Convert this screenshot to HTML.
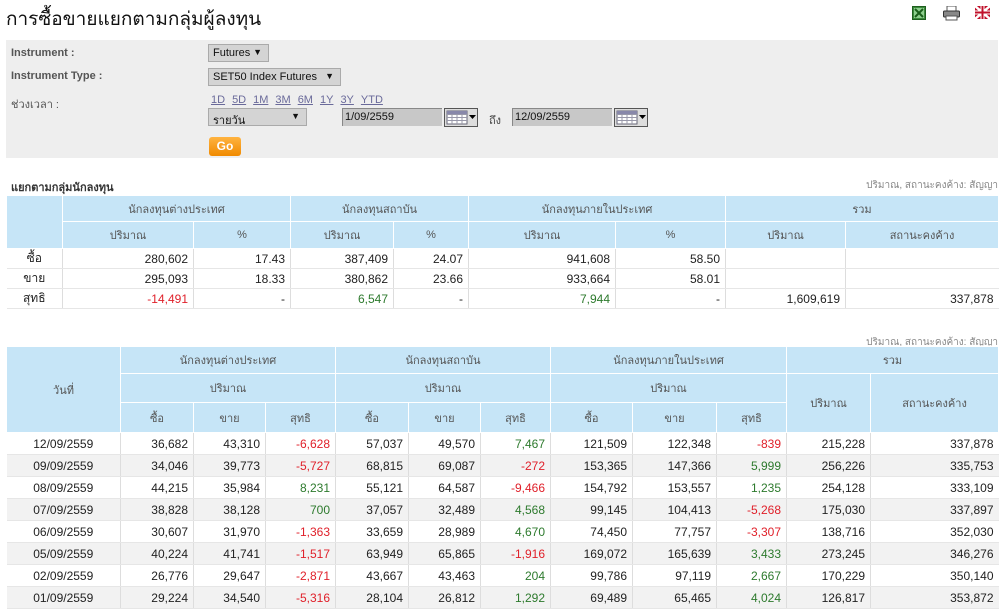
<!DOCTYPE html>
<html><head><meta charset="utf-8">
<style>
*{margin:0;padding:0;box-sizing:border-box}
body{width:1004px;height:611px;overflow:hidden;background:#fff;font-family:Tahoma,"Liberation Sans","Noto Sans CJK SC",sans-serif;font-size:12px;color:#222;position:relative}
.abs{position:absolute}
h1{position:absolute;left:6px;top:4px;font-size:19px;font-weight:normal;color:#111}
.panel{position:absolute;left:6px;top:40px;width:992px;height:118px;background:#eeeeee}
.lbl{position:absolute;left:5px;font-weight:bold;color:#555;font-size:11px}
.sel{position:absolute;background:#d4d4d4;border:1px solid #aaa;height:18px;font-size:11px;padding:2px 4px;color:#111}
.sel b{position:absolute;right:6px;top:2px;font-size:9px}
.inp{position:absolute;background:#c8c8c8;border-top:1px solid #888;border-left:1px solid #888;height:18px;font-size:11px;padding:2px 2px;color:#111}
.cal{position:absolute;width:34px;height:19px}
.links{position:absolute;left:205px;top:54px;color:#557;font-size:11px}
.links span{text-decoration:underline;margin-right:7px;color:#6a6a9a}
.go{position:absolute;left:203px;top:97px;width:32px;height:19px;background:linear-gradient(#ffb340,#f08a00);border-radius:3px;color:#fff;font-weight:bold;text-align:center;line-height:19px;font-size:12px}
table{position:absolute;border-collapse:collapse;table-layout:fixed;font-size:12px}
th{background:#c6e5f7;font-weight:normal;color:#555;border:1px solid #fff;font-size:11px}
td{border-left:1px solid #ddd;border-right:1px solid #ddd;border-bottom:1px solid #e6e6e6;text-align:right;padding:0 5px;color:#222}
td:first-child{border-left:none}
td:last-child{border-right:none}
td.c{text-align:center}
.r{color:#e0202a}.g{color:#2d7a2d}
tr.z td{background:#f2f2f2}
.note{position:absolute;right:6px;font-size:10px;color:#888}
</style></head><body>
<h1>การซื้อขายแยกตามกลุ่มผู้ลงทุน</h1>
<svg class="abs" style="left:912px;top:6px" width="14" height="14"><rect x="0.5" y="0.5" width="13" height="13" fill="#3d8a3d" stroke="#1e5e1e"/><rect x="2" y="2" width="10" height="10" fill="#8fcf8f"/><path d="M3 3L11 11M11 3L3 11" stroke="#1b5e1b" stroke-width="2"/></svg>
<svg class="abs" style="left:943px;top:6px" width="17" height="15"><rect x="4" y="0" width="9" height="5" fill="#fff" stroke="#555"/><rect x="0.5" y="5" width="16" height="6" rx="1" fill="#888" stroke="#333"/><rect x="3" y="10" width="11" height="4" fill="#fff" stroke="#555"/></svg>
<svg class="abs" style="left:975px;top:6px" width="15" height="13"><rect width="15" height="13" fill="#c0102a"/><path d="M0 0L15 13M15 0L0 13" stroke="#fff" stroke-width="2.5"/><path d="M7.5 0V13M0 6.5H15" stroke="#fff" stroke-width="4"/><path d="M7.5 0V13M0 6.5H15" stroke="#c0102a" stroke-width="2"/></svg>
<div class="panel">
<div class="lbl" style="top:7px">Instrument :</div>
<div class="lbl" style="top:30px">Instrument Type :</div>
<div class="lbl" style="top:55px;font-weight:normal">ช่วงเวลา :</div>
<div class="sel" style="left:202px;top:4px;width:61px">Futures<b>▼</b></div>
<div class="sel" style="left:202px;top:28px;width:133px">SET50 Index Futures<b>▼</b></div>
<div class="links"><span>1D</span><span>5D</span><span>1M</span><span>3M</span><span>6M</span><span>1Y</span><span>3Y</span><span>YTD</span></div>
<div class="sel" style="left:202px;top:68px;width:99px">รายวัน<b>▼</b></div>
<div class="inp" style="left:336px;top:68px;width:100px">1/09/2559</div>
<svg class="cal" style="left:438px;top:68px" width="34" height="19"><rect x="0.5" y="0.5" width="33" height="18" fill="#ddd" stroke="#555"/><rect x="3" y="3" width="20" height="13" fill="#fff" stroke="#667"/><path d="M3 6.5H23M3 9.5H23M3 12.5H23M8 6V16M13 6V16M18 6V16" stroke="#99a" stroke-width="1"/><rect x="3" y="3" width="20" height="3" fill="#88a"/><path d="M25 7H32L28.5 11Z" fill="#000"/></svg>
<div class="abs" style="left:483px;top:71px;font-size:11px;color:#444">ถึง</div>
<div class="inp" style="left:506px;top:68px;width:100px">12/09/2559</div>
<svg class="cal" style="left:608px;top:68px" width="34" height="19"><rect x="0.5" y="0.5" width="33" height="18" fill="#ddd" stroke="#555"/><rect x="3" y="3" width="20" height="13" fill="#fff" stroke="#667"/><path d="M3 6.5H23M3 9.5H23M3 12.5H23M8 6V16M13 6V16M18 6V16" stroke="#99a" stroke-width="1"/><rect x="3" y="3" width="20" height="3" fill="#88a"/><path d="M25 7H32L28.5 11Z" fill="#000"/></svg>
<div class="go">Go</div>
</div>
<div class="abs" style="left:11px;top:178px;font-size:11px;font-weight:bold;color:#333">แยกตามกลุ่มนักลงทุน</div>
<div class="note" style="top:178px">ปริมาณ, สถานะคงค้าง: สัญญา</div>
<table style="left:6px;top:195px;width:992px">
<colgroup><col style="width:56px"><col style="width:131px"><col style="width:97px"><col style="width:103px"><col style="width:75px"><col style="width:147px"><col style="width:110px"><col style="width:120px"><col style="width:153px"></colgroup>
<tr style="height:26px"><th rowspan="2"></th><th colspan="2">นักลงทุนต่างประเทศ</th><th colspan="2">นักลงทุนสถาบัน</th><th colspan="2">นักลงทุนภายในประเทศ</th><th colspan="2">รวม</th></tr>
<tr style="height:27px"><th>ปริมาณ</th><th>%</th><th>ปริมาณ</th><th>%</th><th>ปริมาณ</th><th>%</th><th>ปริมาณ</th><th>สถานะคงค้าง</th></tr>
<tr style="height:20px"><td class="c">ซื้อ</td><td>280,602</td><td>17.43</td><td>387,409</td><td>24.07</td><td>941,608</td><td>58.50</td><td></td><td></td></tr>
<tr style="height:20px"><td class="c">ขาย</td><td>295,093</td><td>18.33</td><td>380,862</td><td>23.66</td><td>933,664</td><td>58.01</td><td></td><td></td></tr>
<tr style="height:20px"><td class="c">สุทธิ</td><td class="r">-14,491</td><td>-</td><td class="g">6,547</td><td>-</td><td class="g">7,944</td><td>-</td><td>1,609,619</td><td>337,878</td></tr>
</table>
<div class="note" style="top:335px">ปริมาณ, สถานะคงค้าง: สัญญา</div>
<table style="left:6px;top:346px;width:992px">
<colgroup><col style="width:114px"><col style="width:73px"><col style="width:72px"><col style="width:70px"><col style="width:73px"><col style="width:72px"><col style="width:70px"><col style="width:82px"><col style="width:84px"><col style="width:70px"><col style="width:84px"><col style="width:128px"></colgroup>
<tr style="height:27px"><th rowspan="3">วันที่</th><th colspan="3">นักลงทุนต่างประเทศ</th><th colspan="3">นักลงทุนสถาบัน</th><th colspan="3">นักลงทุนภายในประเทศ</th><th colspan="2">รวม</th></tr>
<tr style="height:29px"><th colspan="3">ปริมาณ</th><th colspan="3">ปริมาณ</th><th colspan="3">ปริมาณ</th><th rowspan="2">ปริมาณ</th><th rowspan="2">สถานะคงค้าง</th></tr>
<tr style="height:30px"><th>ซื้อ</th><th>ขาย</th><th>สุทธิ</th><th>ซื้อ</th><th>ขาย</th><th>สุทธิ</th><th>ซื้อ</th><th>ขาย</th><th>สุทธิ</th></tr>
<tr style="height:22px"><td class="c">12/09/2559</td><td>36,682</td><td>43,310</td><td class="r">-6,628</td><td>57,037</td><td>49,570</td><td class="g">7,467</td><td>121,509</td><td>122,348</td><td class="r">-839</td><td>215,228</td><td>337,878</td></tr>
<tr class="z" style="height:22px"><td class="c">09/09/2559</td><td>34,046</td><td>39,773</td><td class="r">-5,727</td><td>68,815</td><td>69,087</td><td class="r">-272</td><td>153,365</td><td>147,366</td><td class="g">5,999</td><td>256,226</td><td>335,753</td></tr>
<tr style="height:22px"><td class="c">08/09/2559</td><td>44,215</td><td>35,984</td><td class="g">8,231</td><td>55,121</td><td>64,587</td><td class="r">-9,466</td><td>154,792</td><td>153,557</td><td class="g">1,235</td><td>254,128</td><td>333,109</td></tr>
<tr class="z" style="height:22px"><td class="c">07/09/2559</td><td>38,828</td><td>38,128</td><td class="g">700</td><td>37,057</td><td>32,489</td><td class="g">4,568</td><td>99,145</td><td>104,413</td><td class="r">-5,268</td><td>175,030</td><td>337,897</td></tr>
<tr style="height:22px"><td class="c">06/09/2559</td><td>30,607</td><td>31,970</td><td class="r">-1,363</td><td>33,659</td><td>28,989</td><td class="g">4,670</td><td>74,450</td><td>77,757</td><td class="r">-3,307</td><td>138,716</td><td>352,030</td></tr>
<tr class="z" style="height:22px"><td class="c">05/09/2559</td><td>40,224</td><td>41,741</td><td class="r">-1,517</td><td>63,949</td><td>65,865</td><td class="r">-1,916</td><td>169,072</td><td>165,639</td><td class="g">3,433</td><td>273,245</td><td>346,276</td></tr>
<tr style="height:22px"><td class="c">02/09/2559</td><td>26,776</td><td>29,647</td><td class="r">-2,871</td><td>43,667</td><td>43,463</td><td class="g">204</td><td>99,786</td><td>97,119</td><td class="g">2,667</td><td>170,229</td><td>350,140</td></tr>
<tr class="z" style="height:22px"><td class="c">01/09/2559</td><td>29,224</td><td>34,540</td><td class="r">-5,316</td><td>28,104</td><td>26,812</td><td class="g">1,292</td><td>69,489</td><td>65,465</td><td class="g">4,024</td><td>126,817</td><td>353,872</td></tr>
</table>
</body></html>
